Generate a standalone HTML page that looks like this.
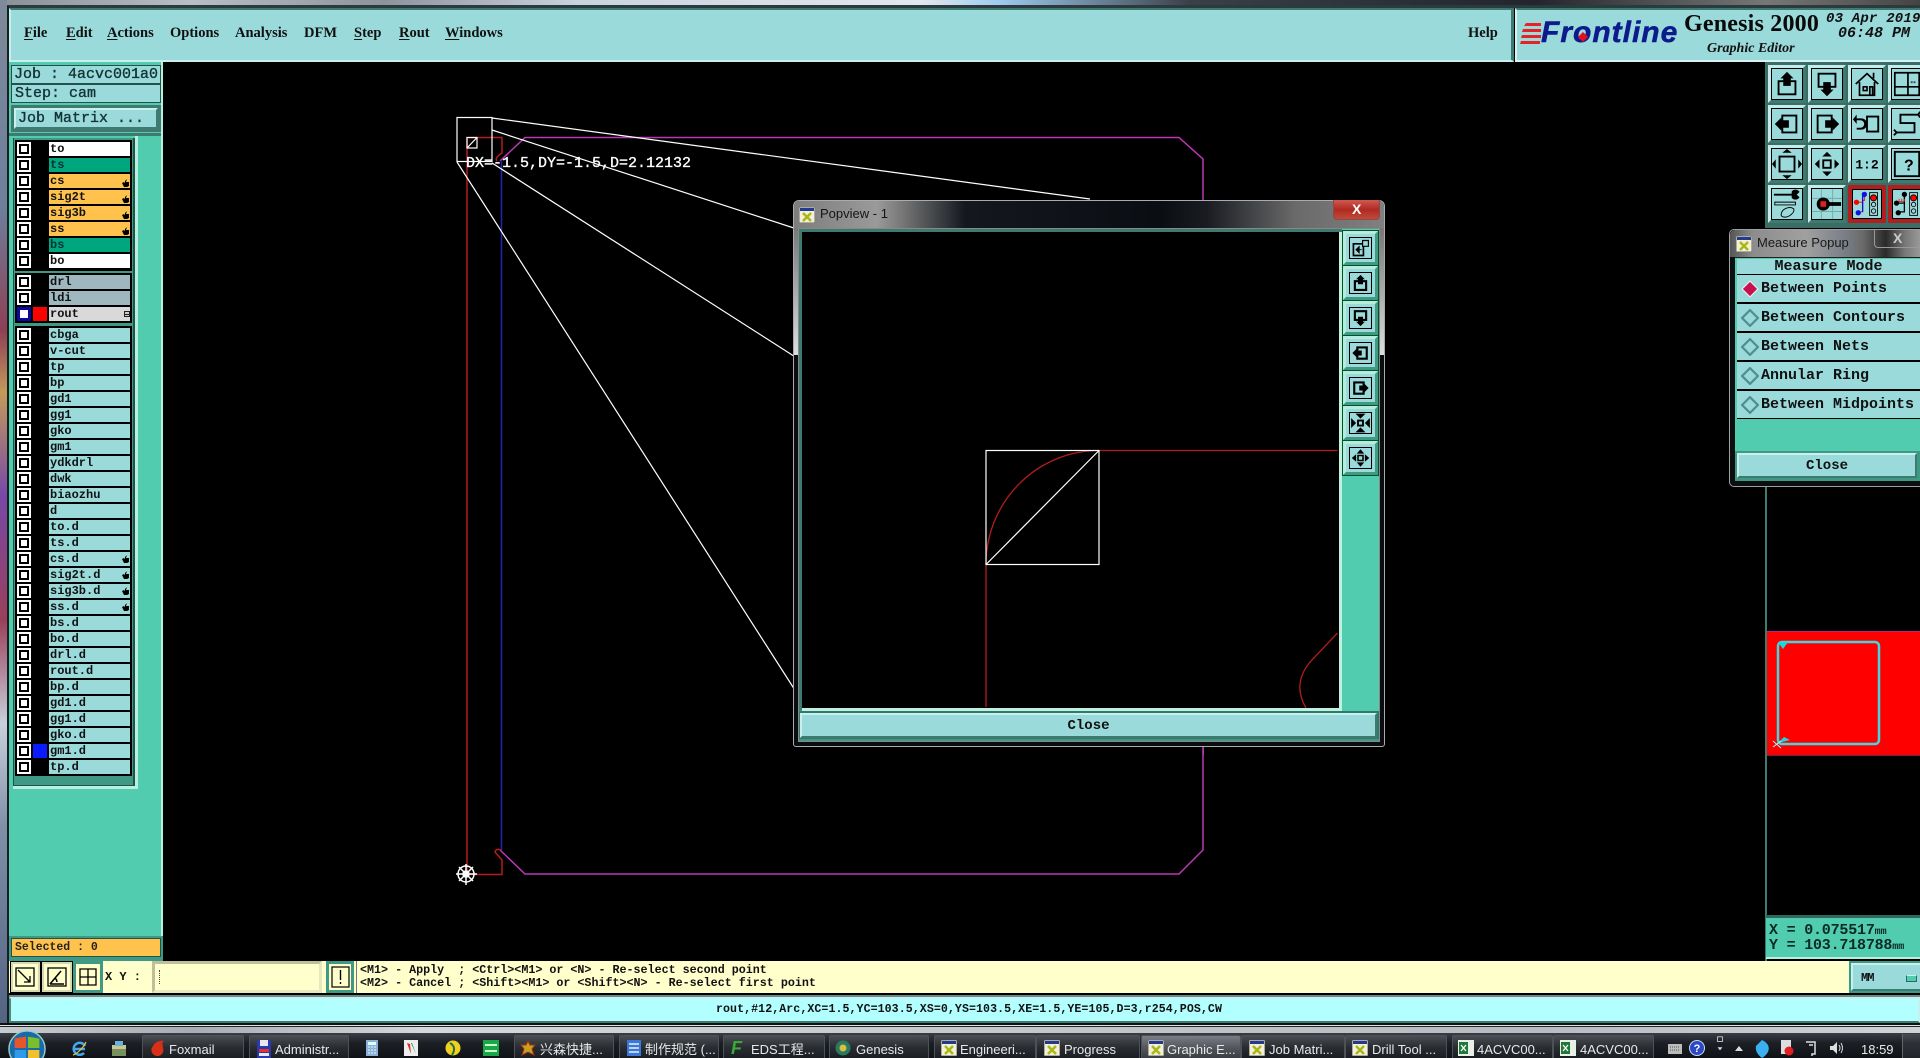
<!DOCTYPE html>
<html><head><meta charset="utf-8"><title>Genesis 2000</title>
<style>
html,body{margin:0;padding:0;width:1920px;height:1058px;overflow:hidden;background:#000}
body{position:relative;font-family:"Liberation Mono",monospace;color:#000}
div,span,svg,b{position:absolute;box-sizing:border-box}
.m{font:bold 14.500px/16px "Liberation Serif",serif;top:25px;white-space:pre;color:#111}
.m u{text-decoration:underline;text-underline-offset:2px;position:static}
.r{left:49px;width:81px;height:14px;background:#9bdadb;font:bold 12px/14px "Liberation Mono",monospace;padding-left:1px;white-space:pre;color:#111}
.c{left:17px;width:14px;height:14px;background:#fff}
.c:after{content:"";position:absolute;left:2px;top:2px;width:10px;height:10px;border:2px solid #000;background:#fff;box-sizing:border-box}
.o{background:#ffc34d}.g{background:#00a67d;color:#033}.w{background:#fff}.y{background:#9fb8bf}
.h{left:122px;width:7px;height:8px}
.t{width:38px;height:38px;background:#9bdadb;border:3px solid;border-color:#c4ecec #3f7a70 #3f7a70 #c4ecec}
.t svg{left:0;top:0;width:32px;height:32px;border:1px solid #000;overflow:hidden}
.tr{border-color:#b02020}
.s{left:1343px;width:35px;height:34px;background:#9bdadb;border:3px solid;border-color:#b5ecdd #3f9a85 #3f9a85 #b5ecdd;outline:1px solid #052;--w:3.400}
.s svg{left:3px;top:3px;width:23px;height:22px;border:1px solid #000}
.p{left:1737px;width:183px;height:27px;background:#9bdadb;font:bold 15px/28px "Liberation Mono",monospace;padding-left:24px;color:#111;white-space:pre}
.p svg{left:4px;top:5px;width:18px;height:18px}
.tk{top:1035px;height:23px;border:1px solid #4d5258;border-bottom:0;border-radius:2px 2px 0 0;background:linear-gradient(#4a4e54,#2a2d32 50%,#1b1e22)}
.tx{top:1042px;font:13px/16px "Liberation Sans","Noto Sans CJK SC",sans-serif;color:#e8e8e8;white-space:pre}
.i{top:1040px;width:16px;height:16px}
.by{background:#ffffcc;top:961px;height:32px}
.l{font:15px/17px "Liberation Mono",monospace;-webkit-text-stroke:.35px #133;white-space:pre;color:#133}
</style></head><body>

<!-- top glass -->
<div style="left:0;top:0;width:1920px;height:6px;background:linear-gradient(90deg,#8a8f98,#b9bec7 10%,#8c949e 20%,#c9d3df 30%,#e2e8ee 48%,#9ecbf0 52%,#3a4048 62%,#22262c 80%,#777 92%,#444)"></div>
<div style="left:0;top:5px;width:1920px;height:3px;background:#2b3a3c"></div>
<!-- left glass -->
<div style="left:0;top:0;width:7px;height:1033px;background:linear-gradient(#7f8a9a,#6d7f9c 20%,#8e3f55 32%,#c49a5a 38%,#7848a8 48%,#9a3f5a 60%,#c8d0dc 70%,#8090a8 80%,#506080)"></div>
<div style="left:7px;top:6px;width:2px;height:1020px;background:#15201f"></div>

<!-- menu bar -->
<div style="left:9px;top:8px;width:1505px;height:54px;background:#9bdadb;border:2px solid;border-color:#3f7a70 #3f7a70 #c8f0ef #c8f0ef"></div>
<div style="left:1511px;top:10px;width:1px;height:50px;background:#3f7a70"></div>
<div class="m" style="left:24px"><u>F</u>ile</div>
<div class="m" style="left:66px"><u>E</u>dit</div>
<div class="m" style="left:107px"><u>A</u>ctions</div>
<div class="m" style="left:170px">Options</div>
<div class="m" style="left:235px">Analysis</div>
<div class="m" style="left:304px">DFM</div>
<div class="m" style="left:354px"><u>S</u>tep</div>
<div class="m" style="left:399px"><u>R</u>out</div>
<div class="m" style="left:445px"><u>W</u>indows</div>
<div class="m" style="left:1468px">Help</div>

<!-- logo area -->
<div style="left:1515px;top:8px;width:405px;height:54px;background:#9bdadb;border-top:2px solid #3f7a70;border-left:2px solid #d6f2f2;border-bottom:2px solid #d6f2f2"></div>
<svg style="left:1520px;top:20px;width:24px;height:26px" viewBox="0 0 24 26"><path d="M6 3h15v3H4zM3 9h18v3H2zM2 15h19v3H1zM1 21h19v3H0z" fill="#e8202a"/></svg>
<div style="left:1541px;top:16px;font:italic bold 30px/34px 'Liberation Sans',sans-serif;color:#0d1a8c;letter-spacing:1px;white-space:pre;-webkit-text-stroke:.5px #0d1a8c">Frontline</div>
<svg style="left:1578px;top:32px;width:10px;height:10px"><path d="M5 0l5 5-5 5-5-5z" fill="#e01020"/></svg>
<div style="left:1684px;top:10px;font:bold 24px/28px 'Liberation Serif',serif;white-space:pre;letter-spacing:.2px;color:#0a0a0a">Genesis 2000</div>
<div style="left:1707px;top:41px;font:italic bold 14px/16px 'Liberation Serif',serif;white-space:pre;color:#111">Graphic Editor</div>
<div style="left:1826px;top:11px;font:italic bold 14px/16px 'Liberation Mono',monospace;white-space:pre;letter-spacing:.2px;color:#111">03 Apr 2019</div>
<div style="left:1838px;top:26px;font:italic bold 15px/16px 'Liberation Mono',monospace;white-space:pre;color:#111">06:48 PM</div>

<!-- main canvas -->
<svg style="left:0;top:0;width:1920px;height:1058px" viewBox="0 0 1920 1058" fill="none">
<g stroke="#bb38b4" stroke-width="1.500">
<path d="M500 161L525 137.500H1179L1203 159V850L1179 874H525L500 850"/>
</g>
<path d="M501.500 160V850" stroke="#2424b0" stroke-width="1.500"/>
<path d="M467 875V137.500H502V153Q494 158 497 161M467 874.500H502V860L495 852Q496 848 501 850" stroke="#b51c1c" stroke-width="1.500"/>
<g stroke="#fff" stroke-width="1.200">
<rect x="457" y="117.500" width="35" height="44"/>
<rect x="467" y="137.500" width="10" height="10.500"/>
<path d="M467 148L477 137.500M492 118L1090 199M492 130L800 230M457 162L800 698M492 163L800 360"/>
</g>
<g stroke="#fff" stroke-width="1.500">
<circle cx="466" cy="874" r="8"/><path d="M456 874H477M466 864V885M459 867L473 881M473 867L459 881"/><circle cx="466" cy="874" r="3"/>
</g>
</svg>
<div style="left:466px;top:155px;font:15px/17px 'Liberation Mono',monospace;-webkit-text-stroke:.3px #fff;color:#fff;white-space:pre">DX=-1.5,DY=-1.5,D=2.12132</div>

<!-- left panel -->
<div style="left:9px;top:62px;width:154px;height:899px;background:#52ccae"></div>
<div class="l" style="left:11px;top:65px;width:150px;height:19px;background:#9bdadb;border:1px solid #24524a;padding-left:2px">Job : 4acvc001a0</div>
<div class="l" style="left:11px;top:84px;width:150px;height:19px;background:#9bdadb;border:1px solid #24524a;padding-left:3px">Step: cam</div>
<div style="left:11px;top:105px;width:150px;height:27px;background:#3f7a70"></div>
<div class="l" style="left:14px;top:108px;width:144px;height:21px;background:#9bdadb;border:2px solid;border-color:#c8f0ef #3f7a70 #3f7a70 #c8f0ef;padding-left:2px">Job Matrix ...</div>
<div style="left:9px;top:133px;width:154px;height:3px;background:#3f7a70"></div>
<div style="left:13px;top:138px;width:122px;height:648px;background:#3f9a85;border-right:2px solid #24524a;border-left:1px solid #24524a;border-bottom:1px solid #24524a"></div>
<div style="left:135px;top:136px;width:3px;height:652px;background:#b8f0e0"></div>
<div style="left:13px;top:786px;width:125px;height:3px;background:#b8f0e0"></div>
<div style="left:161px;top:62px;width:2px;height:899px;background:#b8f0e0"></div>
<div style="left:15px;top:140px;width:117px;height:131px;background:#000"></div>
<div style="left:15px;top:273px;width:117px;height:50px;background:#000"></div>
<div style="left:15px;top:326px;width:117px;height:450px;background:#000"></div>

<i class="c" style="position:absolute;top:142px"></i><div class="r w" style="top:142px">to</div>
<i class="c" style="position:absolute;top:158px"></i><div class="r g" style="top:158px">ts</div>
<i class="c" style="position:absolute;top:174px"></i><div class="r o" style="top:174px">cs</div>
<i class="c" style="position:absolute;top:190px"></i><div class="r o" style="top:190px">sig2t</div>
<i class="c" style="position:absolute;top:206px"></i><div class="r o" style="top:206px">sig3b</div>
<i class="c" style="position:absolute;top:222px"></i><div class="r o" style="top:222px">ss</div>
<i class="c" style="position:absolute;top:238px"></i><div class="r g" style="top:238px">bs</div>
<i class="c" style="position:absolute;top:254px"></i><div class="r w" style="top:254px">bo</div>
<i class="c" style="position:absolute;top:275px"></i><div class="r y" style="top:275px">drl</div>
<i class="c" style="position:absolute;top:291px"></i><div class="r y" style="top:291px">ldi</div>
<div style="left:16px;top:306px;width:16px;height:16px;background:#fff;border:4px solid #0a0a9a;outline:1px solid #000;outline-offset:-1px"></div>
<div style="left:33px;top:307px;width:14px;height:14px;background:#f00"></div>
<div class="r" style="top:307px;background:#d9d9d9">rout</div>
<div style="left:124px;top:311px;width:6px;height:6px;border:1px solid #222;background:linear-gradient(#222,#222) center/4px 1px no-repeat,#ccc"></div>

<i class="c" style="position:absolute;top:328px"></i><div class="r" style="top:328px">cbga</div>
<i class="c" style="position:absolute;top:344px"></i><div class="r" style="top:344px">v-cut</div>
<i class="c" style="position:absolute;top:360px"></i><div class="r" style="top:360px">tp</div>
<i class="c" style="position:absolute;top:376px"></i><div class="r" style="top:376px">bp</div>
<i class="c" style="position:absolute;top:392px"></i><div class="r" style="top:392px">gd1</div>
<i class="c" style="position:absolute;top:408px"></i><div class="r" style="top:408px">gg1</div>
<i class="c" style="position:absolute;top:424px"></i><div class="r" style="top:424px">gko</div>
<i class="c" style="position:absolute;top:440px"></i><div class="r" style="top:440px">gm1</div>
<i class="c" style="position:absolute;top:456px"></i><div class="r" style="top:456px">ydkdrl</div>
<i class="c" style="position:absolute;top:472px"></i><div class="r" style="top:472px">dwk</div>
<i class="c" style="position:absolute;top:488px"></i><div class="r" style="top:488px">biaozhu</div>
<i class="c" style="position:absolute;top:504px"></i><div class="r" style="top:504px">d</div>
<i class="c" style="position:absolute;top:520px"></i><div class="r" style="top:520px">to.d</div>
<i class="c" style="position:absolute;top:536px"></i><div class="r" style="top:536px">ts.d</div>
<i class="c" style="position:absolute;top:552px"></i><div class="r" style="top:552px">cs.d</div>
<i class="c" style="position:absolute;top:568px"></i><div class="r" style="top:568px">sig2t.d</div>
<i class="c" style="position:absolute;top:584px"></i><div class="r" style="top:584px">sig3b.d</div>
<i class="c" style="position:absolute;top:600px"></i><div class="r" style="top:600px">ss.d</div>
<i class="c" style="position:absolute;top:616px"></i><div class="r" style="top:616px">bs.d</div>
<i class="c" style="position:absolute;top:632px"></i><div class="r" style="top:632px">bo.d</div>
<i class="c" style="position:absolute;top:648px"></i><div class="r" style="top:648px">drl.d</div>
<i class="c" style="position:absolute;top:664px"></i><div class="r" style="top:664px">rout.d</div>
<i class="c" style="position:absolute;top:680px"></i><div class="r" style="top:680px">bp.d</div>
<i class="c" style="position:absolute;top:696px"></i><div class="r" style="top:696px">gd1.d</div>
<i class="c" style="position:absolute;top:712px"></i><div class="r" style="top:712px">gg1.d</div>
<i class="c" style="position:absolute;top:728px"></i><div class="r" style="top:728px">gko.d</div>
<i class="c" style="position:absolute;top:744px"></i><div class="r" style="top:744px">gm1.d</div>
<div style="left:33px;top:744px;width:14px;height:14px;background:#0a1cff"></div>
<i class="c" style="position:absolute;top:760px"></i><div class="r" style="top:760px">tp.d</div>

<svg width="0" height="0" style="left:0;top:0"><defs>
<symbol id="hd" viewBox="0 0 7 8"><path d="M0 4L2 3 3 4V2L5 0 4 3H7V7L5 8H2L1 6z" fill="#000"/></symbol>
<symbol id="xi" viewBox="0 0 16 16"><rect width="16" height="16" fill="#f4f0d8" stroke="#666"/><rect x="1" y="1" width="14" height="3" fill="#223a90"/><path d="M4 6l8 8M12 6l-8 8" stroke="#a8b818" stroke-width="2.500"/></symbol>
<symbol id="up" viewBox="0 0 32 32"><path d="M7 13H25V27H7z" fill="none" stroke="#000" style="stroke-width:var(--w,2)"/><path d="M16 3L23 10H20V18H12V10H9z" fill="#000"/></symbol>
<symbol id="dn" viewBox="0 0 32 32"><path d="M7 5H25V19H7z" fill="none" stroke="#000" style="stroke-width:var(--w,2)"/><path d="M16 29L23 22H20V14H12V22H9z" fill="#000"/></symbol>
<symbol id="lf" viewBox="0 0 32 32"><path d="M11 7H26V25H11z" fill="none" stroke="#000" style="stroke-width:var(--w,2)"/><path d="M3 16L10 9V12H18V20H10V23z" fill="#000"/></symbol>
<symbol id="rt" viewBox="0 0 32 32"><path d="M6 7H21V25H6z" fill="none" stroke="#000" style="stroke-width:var(--w,2)"/><path d="M29 16L22 9V12H14V20H22V23z" fill="#000"/></symbol>
<symbol id="fo" viewBox="0 0 32 32"><path d="M8 8H24V24H8z" fill="none" stroke="#000" stroke-width="2"/><path d="M16 0L21 4H11zM16 32L11 28H21zM0 16L4 11V21zM32 16L28 21V11z" fill="#000"/></symbol>
<symbol id="fi" viewBox="0 0 32 32"><path d="M12 12H20V20H12z" fill="none" stroke="#000" stroke-width="2"/><path d="M16 3L21 8H11zM16 29L11 24H21zM3 16L8 11V21zM29 16L24 21V11z" fill="#000"/></symbol>
<symbol id="tl" viewBox="0 0 32 32"><rect x="19" y="3" width="9" height="26" fill="none" stroke="#000"/><circle cx="23.500" cy="9" r="3.500" fill="#f00" stroke="#000"/><circle cx="23.500" cy="16.500" r="2.500" fill="none" stroke="#000"/><circle cx="23.500" cy="24" r="2.500" fill="none" stroke="#000"/></symbol>
</defs></svg>
<svg class="h" style="top:179px"><use href="#hd"/></svg>
<svg class="h" style="top:195px"><use href="#hd"/></svg>
<svg class="h" style="top:211px"><use href="#hd"/></svg>
<svg class="h" style="top:227px"><use href="#hd"/></svg>
<svg class="h" style="top:555px"><use href="#hd"/></svg>
<svg class="h" style="top:571px"><use href="#hd"/></svg>
<svg class="h" style="top:587px"><use href="#hd"/></svg>
<svg class="h" style="top:603px"><use href="#hd"/></svg>

<div style="left:9px;top:936px;width:154px;height:25px;background:#3f9a85"></div>
<div style="left:11px;top:938px;width:150px;height:19px;background:#ffc34d;border:1px solid #24524a;font:bold 11.500px/17px 'Liberation Mono',monospace;padding-left:3px;color:#222;white-space:pre">Selected : 0</div>

<!-- tool buttons -->
<div style="left:1765px;top:62px;width:155px;height:166px;background:#3a6e64"></div>
<div class="t" style="left:1768px;top:65px"><svg viewBox="0 0 32 32"><use href="#up"/></svg></div>
<div class="t" style="left:1808px;top:65px"><svg viewBox="0 0 32 32"><use href="#dn"/></svg></div>
<div class="t" style="left:1848px;top:65px"><svg viewBox="0 0 32 32"><path d="M4 16L16 5 28 16M8 14V28H24V14M12 19h4v4h-4zM19 19h3v9h-3zM23 4v6" fill="none" stroke="#000" stroke-width="1.800"/></svg></div>
<div class="t" style="left:1888px;top:65px"><svg viewBox="0 0 32 32"><path d="M3 4H29V28H3zM3 19H29M17 4V28" fill="none" stroke="#000" stroke-width="1.800"/><path d="M20 14h6" stroke="#444" stroke-width="2" stroke-dasharray="2 1"/></svg></div>
<div class="t" style="left:1768px;top:105px"><svg viewBox="0 0 32 32"><use href="#lf"/></svg></div>
<div class="t" style="left:1808px;top:105px"><svg viewBox="0 0 32 32"><use href="#rt"/></svg></div>
<div class="t" style="left:1848px;top:105px"><svg viewBox="0 0 32 32"><path d="M16 8H28V24H16z" fill="none" stroke="#000" stroke-width="2"/><path d="M5 10h5a4 4 0 0 1 0 12H5v-2h4a2 2 0 0 0 0-8H5V16L1 11 5 6z" fill="#000"/></svg></div>
<div class="t" style="left:1888px;top:105px"><svg viewBox="0 0 32 32"><path d="M28 6H9V15H24V25H5M2 22l3 3-3 3M30 3l-2 3 2 3" fill="none" stroke="#000" stroke-width="2"/></svg></div>
<div class="t" style="left:1768px;top:145px"><svg viewBox="0 0 32 32"><use href="#fo"/></svg></div>
<div class="t" style="left:1808px;top:145px"><svg viewBox="0 0 32 32"><use href="#fi"/></svg></div>
<div class="t" style="left:1848px;top:145px"><svg viewBox="0 0 32 32"><text x="16" y="21" font-family="Liberation Mono" font-weight="bold" font-size="14" text-anchor="middle">1:2</text></svg></div>
<div class="t" style="left:1888px;top:145px"><svg viewBox="0 0 32 32"><path d="M3 3H29V29H3z" fill="none" stroke="#000" stroke-width="2"/><text x="18" y="23" font-family="Liberation Sans" font-weight="bold" font-size="17" text-anchor="middle">?</text></svg></div>
<div class="t" style="left:1768px;top:185px"><svg viewBox="0 0 32 32"><path d="M2 6H22M22 3a4 4 0 0 1 6 0l-3 3 3 3a4 4 0 0 1-6 0z" stroke="#000" stroke-width="2" fill="#000"/><path d="M3 14H25V17H3z" fill="none" stroke="#000"/><path d="M10 26c1-5 9-8 13-5 2 3-4 9-9 9-3 0-5-1-4-4z" fill="none" stroke="#000"/></svg></div>
<div class="t" style="left:1808px;top:185px"><svg viewBox="0 0 32 32"><path d="M10 0V32M22 0V32M0 10H32M0 24H32" stroke="#7aa" stroke-width="1"/><path d="M14 14H31V18H14z" fill="#000"/><circle cx="12" cy="16" r="7" fill="#000"/><rect x="9" y="13" width="6" height="6" fill="#e02020"/></svg></div>
<div class="t tr" style="left:1848px;top:185px;border-width:4px"><svg viewBox="0 0 32 32" style="width:30px;height:30px"><use href="#tl"/><path d="M5 14H11V25H6M13 4V12H11" fill="none" stroke="#e02020" stroke-width="1.200"/><path d="M13 4H11V25" fill="none" stroke="#1010d0" stroke-width="1.500"/><circle cx="4" cy="14" r="3" fill="#f00"/><circle cx="13" cy="5" r="3" fill="#1010e0"/><circle cx="6" cy="26" r="3" fill="#1010e0"/></svg></div>
<div class="t tr" style="left:1888px;top:185px;border-width:4px"><svg viewBox="0 0 32 32" style="width:30px;height:30px"><use href="#tl"/><path d="M5 15H13V25H6M13 5V15" fill="none" stroke="#000" stroke-width="1.500"/><path d="M7 13V10M10 13V10M13 13V10M6 13H13" stroke="#e02020" stroke-width="1"/><circle cx="4" cy="15" r="3" fill="#000"/><circle cx="13" cy="5" r="3" fill="#000"/><circle cx="6" cy="26" r="3" fill="#000"/></svg></div>

<!-- right strip -->
<div style="left:1765px;top:487px;width:2px;height:474px;background:#3f7a70"></div>
<div style="left:1767px;top:631px;width:153px;height:125px;background:#f00;border-top:1px solid #c0208a;border-bottom:1px solid #70204a"></div>
<svg style="left:1767px;top:631px;width:153px;height:125px" fill="none"><rect x="11" y="11" width="101" height="102" rx="4" stroke="#3fd8e0" stroke-width="2.500"/><path d="M11 11l10 0-5 7zM11 112l12-3-6-3z" fill="#1ad8e0"/><path d="M6 116l8-6M6 110l8 7" stroke="#9ff" stroke-width="1"/></svg>
<div style="left:1766px;top:915px;width:154px;height:44px;background:#52ccae;border-top:3px solid #2f6a5f;border-bottom:2px solid #b8f0e0"></div>
<div style="left:1769px;top:923px;font:bold 15px/15px 'Liberation Mono',monospace;white-space:pre;color:#0a2a24;letter-spacing:-.2px">X = 0.075517<span style="position:static;font-size:10px;letter-spacing:0">mm</span></div>
<div style="left:1769px;top:938px;font:bold 15px/15px 'Liberation Mono',monospace;white-space:pre;color:#0a2a24;letter-spacing:-.2px">Y = 103.718788<span style="position:static;font-size:10px;letter-spacing:0">mm</span></div>

<!-- measure popup -->
<div style="left:1729px;top:229px;width:191px;height:258px;background:#0c0e10;border:1px solid #9aa0a4;border-right:0;border-radius:5px 0 0 5px"></div>
<div style="left:1730px;top:230px;width:190px;height:27px;border-radius:5px 0 0 0;background:linear-gradient(90deg,#555 0,#8c8c8c 12%,#a0a0a0 40%,#7a8088 60%,#6a6a6a 70%,#2a2a2a 82%,#777 92%,#999)"></div>
<svg style="left:1736px;top:236px;width:16px;height:16px"><use href="#xi"/></svg>
<div style="left:1757px;top:235px;font:13px/16px 'Liberation Sans',sans-serif;color:#1a1a1a;white-space:pre">Measure Popup</div>
<div style="left:1874px;top:229px;width:46px;height:19px;border:1px solid #999;border-top:0;border-right:0;border-radius:0 0 0 4px"></div>
<div style="left:1893px;top:230px;font:bold 14px/16px 'Liberation Sans',sans-serif;color:#ccc">X</div>
<div style="left:1735px;top:257px;width:185px;height:224px;background:#52ccae;border-top:1px solid #222"></div>
<div style="left:1737px;top:259px;width:183px;height:160px;background:#000"></div>
<div style="left:1737px;top:259px;width:183px;height:15px;background:#9bdadb;font:bold 15px/15px 'Liberation Mono',monospace;text-align:center;white-space:pre;color:#111">Measure Mode</div>
<div class="p" style="top:275px">Between Points<svg viewBox="0 0 16 16"><path d="M8 1l7 7-7 7-7-7z" fill="#c8104e" stroke="#e0f4f4"/></svg></div>
<div class="p" style="top:304px">Between Contours<svg viewBox="0 0 16 16"><path d="M8 1l7 7-7 7-7-7z" fill="none" stroke="#4f8f8f" stroke-width="2"/></svg></div>
<div class="p" style="top:333px">Between Nets<svg viewBox="0 0 16 16"><path d="M8 1l7 7-7 7-7-7z" fill="none" stroke="#4f8f8f" stroke-width="2"/></svg></div>
<div class="p" style="top:362px">Annular Ring<svg viewBox="0 0 16 16"><path d="M8 1l7 7-7 7-7-7z" fill="none" stroke="#4f8f8f" stroke-width="2"/></svg></div>
<div class="p" style="top:391px">Between Midpoints<svg viewBox="0 0 16 16"><path d="M8 1l7 7-7 7-7-7z" fill="none" stroke="#4f8f8f" stroke-width="2"/></svg></div>
<div style="left:1735px;top:451px;width:185px;height:30px;background:#3f9a85"></div>
<div style="left:1737px;top:453px;width:180px;height:25px;background:#9bdadb;border:2px solid;border-color:#c8f0ef #3f7a70 #3f7a70 #c8f0ef;font:bold 14px/23px 'Liberation Mono',monospace;text-align:center;color:#111">Close</div>

<!-- popview -->
<div style="left:793px;top:200px;width:592px;height:547px;background:#0a0c10;border:1px solid #a8acb0;border-radius:6px 6px 3px 3px"></div>
<div style="left:794px;top:201px;width:590px;height:27px;border-radius:5px 5px 0 0;background:linear-gradient(90deg,#7d7d7d,#9a9a9a 14%,#7a7a7a 18%,#14181e 29%,#0a0d12 62%,#1a1c22 70%,#6a6a6a 85%,#808080)"></div>
<div style="left:794px;top:228px;width:4px;height:127px;background:linear-gradient(#777,#ddd)"></div>
<div style="left:1380px;top:228px;width:4px;height:127px;background:linear-gradient(#777,#ddd)"></div>
<svg style="left:799px;top:207px;width:16px;height:16px"><use href="#xi"/></svg>
<div style="left:820px;top:206px;font:13px/16px 'Liberation Sans',sans-serif;color:#151515;white-space:pre">Popview - 1</div>
<div style="left:1333px;top:200px;width:47px;height:20px;border:1px solid #8a4a48;border-top:0;border-radius:0 0 4px 4px;background:linear-gradient(#d05a50,#b02a22 50%,#c04a3a)"></div>
<div style="left:1352px;top:201px;font:bold 14px/17px 'Liberation Sans',sans-serif;color:#fff">X</div>
<div style="left:798px;top:228px;width:582px;height:514px;background:#3f9a85;border:1px solid #888"></div>
<div style="left:799px;top:229px;width:543px;height:4px;background:#3f7a70"></div>
<div style="left:799px;top:229px;width:3px;height:481px;background:#3f7a70"></div>
<div style="left:802px;top:232px;width:537px;height:476px;background:#000"></div>
<div style="left:802px;top:708px;width:539px;height:3px;background:#c0f0e0"></div>
<div style="left:1339px;top:232px;width:3px;height:479px;background:#c0f0e0"></div>
<div style="left:1342px;top:229px;width:37px;height:482px;background:#52ccae"></div>
<svg style="left:802px;top:232px;width:537px;height:476px" viewBox="802 232 537 476" fill="none">
<path d="M986 564A113 114 0 0 1 1099 450.500H1337.500M986 564V707M1337.500 633L1310 662Q1292 684 1306 708" stroke="#b51c1c" stroke-width="1.300"/>
<rect x="986" y="450.500" width="113" height="114" stroke="#fff" stroke-width="1.200"/>
<path d="M986 564.500L1099 450.500" stroke="#fff" stroke-width="1.200"/>
</svg>
<div class="s" style="top:231px"><svg viewBox="0 0 25 24"><path d="M4 7H16V21H4z" fill="none" stroke="#000" stroke-width="2"/><path d="M15 3H22V10H15z" fill="#9bdadb" stroke="#000" stroke-width="1.400"/><path d="M7 14L11 10V18zM11 14H14" fill="#000" stroke="#000"/></svg></div>
<div class="s" style="top:266px"><svg viewBox="0 0 32 32"><use href="#up"/></svg></div>
<div class="s" style="top:301px"><svg viewBox="0 0 32 32"><use href="#dn"/></svg></div>
<div class="s" style="top:336px"><svg viewBox="0 0 32 32"><use href="#lf"/></svg></div>
<div class="s" style="top:371px"><svg viewBox="0 0 32 32"><use href="#rt"/></svg></div>
<div class="s" style="top:406px"><svg viewBox="0 0 32 32"><path d="M12 12H20V20H12z" fill="none" stroke="#000" stroke-width="3"/><path d="M16 9L8 1H24zM16 23L24 31H8zM9 16L1 8V24zM23 16L31 24V8z" fill="#000"/></svg></div>
<div class="s" style="top:441px"><svg viewBox="0 0 32 32"><path d="M12 12H20V20H12z" fill="none" stroke="#000" stroke-width="2.500"/><path d="M16 2L22 9H10zM16 30L10 23H22zM2 16L9 10V22zM30 16L23 22V10z" fill="#000"/></svg></div>
<div style="left:799px;top:711px;width:580px;height:28px;background:#2f7a6a"></div>
<div style="left:800px;top:713px;width:577px;height:25px;background:#9bdadb;border:2px solid;border-color:#c8f0ef #3f7a70 #3f7a70 #c8f0ef;font:bold 14px/23px 'Liberation Mono',monospace;text-align:center;color:#111">Close</div>
<div style="left:1203px;top:747px;width:1px;height:8px;background:#bb38b4"></div>

<!-- bottom input row -->
<div class="by" style="left:9px;width:1840px"></div>
<div style="left:10px;top:961px;width:31px;height:32px;border:3px solid #d8d8b0;outline:1px solid #000;outline-offset:-1px"><svg style="left:2px;top:3px;width:20px;height:20px" viewBox="0 0 20 20" fill="none"><rect x="1" y="1" width="18" height="18" stroke="#000" stroke-width="1.300"/><path d="M3 3L15 15M15 9V15H9" stroke="#000" stroke-width="1.300"/></svg></div>
<div style="left:41px;top:961px;width:32px;height:32px;border:3px solid #d8d8b0;outline:1px solid #000;outline-offset:-1px"><svg style="left:3px;top:3px;width:20px;height:20px" viewBox="0 0 20 20" fill="none"><rect x="1" y="1" width="18" height="18" stroke="#000" stroke-width="1.300"/><path d="M3 17L14 4M3 17H17M10 15a6 6 0 0 0-2-4" stroke="#000" stroke-width="1.500"/></svg></div>
<div style="left:73px;top:961px;width:30px;height:32px;border:3px solid #3f9a85;background:#ffffcc"><svg style="left:3px;top:4px;width:18px;height:18px" viewBox="0 0 18 18" fill="none"><path d="M1 1H17V17H1zM1 9H17M9 1V17" stroke="#000" stroke-width="1.300"/></svg></div>
<div style="left:105px;top:969px;font:bold 12px/16px 'Liberation Mono',monospace;white-space:pre;color:#111">X Y :</div>
<div style="left:152px;top:961px;width:170px;height:32px;background:#ffffcc;border:3px solid;border-color:#bfbf99 #e8e8c0 #e8e8c0 #bfbf99"></div>
<div style="left:159px;top:970px;width:1px;height:14px;border-left:1px dotted #444"></div>
<div style="left:326px;top:961px;width:28px;height:32px;border:3px solid #3f9a85;background:#ffffcc"><svg style="left:2px;top:2px;width:19px;height:22px" viewBox="0 0 19 22" fill="none"><rect x="1" y="1" width="17" height="20" stroke="#000" stroke-width="1.200"/><path d="M9.500 4V14M9.500 16V18" stroke="#000" stroke-width="1.400"/></svg></div>
<div style="left:356px;top:961px;width:1px;height:32px;background:#777"></div>
<div style="left:360px;top:964px;font:bold 11.700px/13px 'Liberation Mono',monospace;white-space:pre;color:#111">&lt;M1&gt; - Apply  ; &lt;Ctrl&gt;&lt;M1&gt; or &lt;N&gt; - Re-select second point
&lt;M2&gt; - Cancel ; &lt;Shift&gt;&lt;M1&gt; or &lt;Shift&gt;&lt;N&gt; - Re-select first point</div>
<div style="left:1849px;top:961px;width:71px;height:32px;background:#3f9a85"></div>
<div style="left:1851px;top:963px;width:69px;height:28px;background:#9bdadb;border-top:2px solid #c8f0ef;border-left:2px solid #c8f0ef;border-bottom:2px solid #3f7a70"></div>
<div style="left:1861px;top:971px;font:bold 12px/14px 'Liberation Mono',monospace;color:#111;letter-spacing:-1px">MM</div>
<div style="left:1906px;top:975px;width:11px;height:7px;background:#52ccae;border:1px solid #2f6a5f;border-top-color:#c8f0ef"></div>

<!-- status -->
<div style="left:9px;top:993px;width:1911px;height:4px;background:#000;border-bottom:2px solid #6a8a88"></div>
<div style="left:9px;top:997px;width:1911px;height:26px;background:#b2ffff;border:2px solid;border-color:#c8f0ef #c8f0ef #3f7a70 #4f8a80"></div>
<div style="left:716px;top:1002px;font:bold 11.600px/16px 'Liberation Mono',monospace;letter-spacing:.07px;white-space:pre;color:#111">rout,#12,Arc,XC=1.5,YC=103.5,XS=0,YS=103.5,XE=1.5,YE=105,D=3,r254,POS,CW</div>
<div style="left:0;top:1023px;width:1920px;height:2px;background:#111"></div>
<div style="left:0;top:1025px;width:1920px;height:1px;background:#e0e4e8"></div>
<div style="left:0;top:1026px;width:1920px;height:1px;background:#222"></div>
<div style="left:0;top:1027px;width:1920px;height:6px;background:linear-gradient(90deg,#c8ccd0,#a8adb4 10%,#d4d8dc 22%,#c0c4c8 60%,#b8bcc2 80%,#d0d4d8)"></div>

<!-- taskbar -->
<div style="left:0;top:1033px;width:1920px;height:25px;background:linear-gradient(#3a3e44,#1c2026 40%,#0f1216)"></div>
<svg style="left:8px;top:1030px;width:38px;height:38px" viewBox="0 0 40 40"><circle cx="20" cy="20" r="19" fill="#1a6aa8" stroke="#9cc" stroke-width="1.500"/><path d="M7 9L19 7V19H7z" fill="#e8552a"/><path d="M21 7L33 9V19H21z" fill="#7abf2a"/><path d="M7 21H19V32L7 30z" fill="#2f9be8"/><path d="M21 21H33V30L21 32z" fill="#f2c02a"/></svg>
<svg class="i" style="left:71px;width:17px;height:18px;top:1040px" viewBox="0 0 17 18" fill="none"><path d="M14 6A6 6 0 1 0 13 13M3 9H14" stroke="#3fa8f0" stroke-width="2.500"/><path d="M2 15C6 14 13 7 15 2" stroke="#f0c040" stroke-width="1.200"/></svg>
<svg class="i" style="left:111px" viewBox="0 0 16 16"><path d="M1 5H15V16H1z" fill="#c8c890"/><path d="M4 1H12V6H4z" fill="#6ab0d8"/><path d="M1 9H15V16H1z" fill="#789060"/></svg>
<div class="tk" style="left:142px;width:102px"></div>
<svg class="i" style="left:150px" viewBox="0 0 16 16"><path d="M3 6C5 2 10 0 14 1 11 3 13 5 13 8A6 6 0 1 1 3 6z" fill="#d83018"/></svg>
<div class="tx" style="left:169px">Foxmail</div>
<div class="tk" style="left:249px;width:100px"></div>
<svg class="i" style="left:256px;height:18px" viewBox="0 0 16 18"><rect x="1" y="0" width="14" height="18" fill="#2a3aa8"/><rect x="4" y="0" width="8" height="6" fill="#e8e8f0"/><rect x="3" y="9" width="10" height="3" fill="#e83030"/><rect x="3" y="13" width="10" height="3" fill="#e8e8f0"/></svg>
<div class="tx" style="left:275px">Administr...</div>
<svg class="i" style="left:364px" viewBox="0 0 16 16"><rect x="2" width="12" height="16" fill="#8cb0d8"/><rect x="4" y="2" width="8" height="3" fill="#dff"/><path d="M4 7h8M4 10h8M4 13h8" stroke="#dff" stroke-dasharray="2 1"/></svg>
<svg class="i" style="left:403px" viewBox="0 0 16 16"><rect x="1" width="14" height="16" fill="#eee"/><path d="M4 3L8 14 7 4z" fill="#d03020"/><path d="M8 3L13 14 9 3z" fill="#208040"/></svg>
<svg class="i" style="left:445px" viewBox="0 0 16 16"><circle cx="8" cy="8" r="7.500" fill="#f0d020"/><path d="M5 3Q12 7 7 15" stroke="#207048" stroke-width="2" fill="none"/></svg>
<svg class="i" style="left:483px" viewBox="0 0 16 16"><rect width="16" height="16" fill="#18a848"/><path d="M2 5H14M2 11H14" stroke="#cfc" stroke-width="2"/></svg>
<div class="tk" style="left:514px;width:100px"></div>
<svg class="i" style="left:520px" viewBox="0 0 16 16"><path d="M8 1l2 4 5 0-3 4 2 6-6-3-6 3 2-6-3-4 5 0z" fill="#c8a020" stroke="#a03010"/></svg>
<div class="tx" style="left:540px">兴森快捷...</div>
<div class="tk" style="left:619px;width:100px"></div>
<svg class="i" style="left:626px" viewBox="0 0 16 16"><rect x="1" y="0" width="14" height="16" fill="#3a78d8"/><path d="M3 4h10M3 8h10M3 12h10" stroke="#eef" stroke-width="1.500"/></svg>
<div class="tx" style="left:645px">制作规范 (...</div>
<div class="tk" style="left:723px;width:102px"></div>
<div style="left:731px;top:1039px;font:italic bold 18px/18px 'Liberation Sans',sans-serif;color:#38a838">F</div>
<div class="tx" style="left:751px">EDS工程...</div>
<div class="tk" style="left:829px;width:100px"></div>
<svg class="i" style="left:835px" viewBox="0 0 16 16"><circle cx="8" cy="8" r="7.500" fill="#2a7a60"/><circle cx="8" cy="8" r="3.500" fill="#d8c040"/></svg>
<div class="tx" style="left:856px">Genesis</div>
<div class="tk" style="left:934px;width:102px"></div>
<svg class="i" style="left:941px"><use href="#xi"/></svg>
<div class="tx" style="left:960px">Engineeri...</div>
<div class="tk" style="left:1036px;width:104px"></div>
<svg class="i" style="left:1044px"><use href="#xi"/></svg>
<div class="tx" style="left:1064px">Progress</div>
<div class="tk" style="left:1141px;width:100px;background:linear-gradient(#7a7e84,#55595f 50%,#3a3d42)"></div>
<svg class="i" style="left:1148px"><use href="#xi"/></svg>
<div class="tx" style="left:1167px">Graphic E...</div>
<div class="tk" style="left:1241px;width:104px"></div>
<svg class="i" style="left:1249px"><use href="#xi"/></svg>
<div class="tx" style="left:1269px">Job Matri...</div>
<div class="tk" style="left:1345px;width:102px"></div>
<svg class="i" style="left:1352px"><use href="#xi"/></svg>
<div class="tx" style="left:1372px">Drill Tool ...</div>
<div class="tk" style="left:1452px;width:101px"></div>
<svg class="i" style="left:1458px" viewBox="0 0 16 16"><rect width="16" height="16" fill="#e8f0e8"/><rect x="1" y="2" width="9" height="12" fill="#207838"/><path d="M3 5l5 6M8 5l-5 6" stroke="#fff" stroke-width="1.300"/></svg>
<div class="tx" style="left:1477px">4ACVC00...</div>
<div class="tk" style="left:1553px;width:101px"></div>
<svg class="i" style="left:1560px" viewBox="0 0 16 16"><rect width="16" height="16" fill="#e8f0e8"/><rect x="1" y="2" width="9" height="12" fill="#207838"/><path d="M3 5l5 6M8 5l-5 6" stroke="#fff" stroke-width="1.300"/></svg>
<div class="tx" style="left:1580px">4ACVC00...</div>
<svg class="i" style="left:1667px" viewBox="0 0 16 16"><rect x="1" y="4" width="14" height="10" fill="#bbb"/><path d="M3 7h10M3 10h10" stroke="#555" stroke-dasharray="1 1"/></svg>
<svg class="i" style="left:1689px" viewBox="0 0 16 16"><circle cx="8" cy="8" r="7.500" fill="#2a48c8" stroke="#cde"/><text x="8" y="12" font-family="Liberation Sans" font-weight="bold" font-size="11" text-anchor="middle" fill="#fff">?</text></svg>
<svg class="i" style="left:1715px;width:10px;top:1036px" viewBox="0 0 10 20"><rect x="2" y="1" width="6" height="6" fill="none" stroke="#ddd"/><path d="M2 14H8L5 18z" fill="#ddd"/></svg>
<svg class="i" style="left:1734px;width:10px" viewBox="0 0 10 16"><path d="M1 11H9L5 6z" fill="#ddd"/></svg>
<svg class="i" style="left:1754px;height:18px" viewBox="0 0 16 18"><path d="M8 0C14 3 16 7 14 12 12 15 10 17 8 18 4 15 1 11 2 6z" fill="#3ab0f0"/></svg>
<svg class="i" style="left:1780px" viewBox="0 0 16 16"><rect x="1" width="10" height="14" fill="#ddd"/><circle cx="9" cy="11" r="4.500" fill="#e02020"/></svg>
<svg class="i" style="left:1804px" viewBox="0 0 16 16" fill="none"><path d="M2 2H11V14H8V16M5 5H9" stroke="#ddd" stroke-width="1.500"/></svg>
<svg class="i" style="left:1828px" viewBox="0 0 16 16" fill="none"><path d="M2 6H5L9 2V14L5 10H2z" fill="#ddd"/><path d="M11 5Q13 8 11 11M13 3Q16 8 13 13" stroke="#ddd"/></svg>
<div class="tx" style="left:1861px">18:59</div>
<div style="left:1902px;top:1034px;width:18px;height:24px;border-left:1px solid #666;background:rgba(255,255,255,.08)"></div>
</body></html>
